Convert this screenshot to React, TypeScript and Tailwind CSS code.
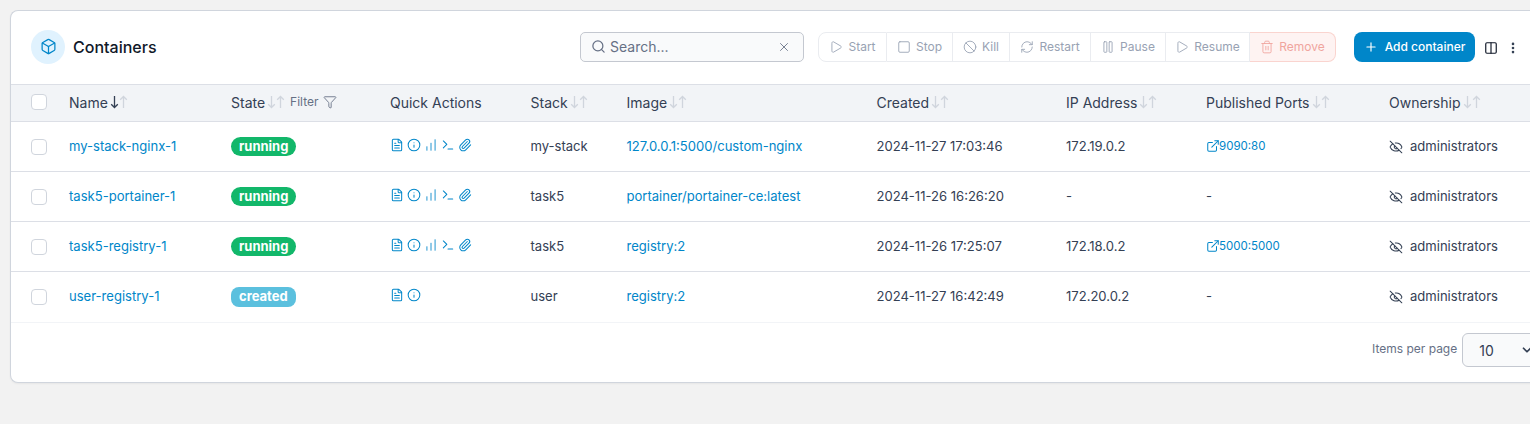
import {
  Ban,
  Box,
  ChartNoAxesColumnIncreasing,
  ChevronDown,
  Columns2,
  ExternalLink,
  EyeOff,
  FileText,
  Filter,
  Info,
  MoreVertical,
  Paperclip,
  Pause,
  Play,
  Plus,
  RefreshCw,
  Search,
  Square,
  Terminal,
  Trash2,
  X,
} from 'lucide-react';

const gridCols = 'grid grid-cols-[58px_162px_159px_140.5px_96px_250px_189.5px_140px_183px_1fr] items-center';

const actions = [
  { label: 'Start', icon: Play, className: 'w-[69px]' },
  { label: 'Stop', icon: Square, className: 'w-[66px]' },
  { label: 'Kill', icon: Ban, className: 'w-[57px]' },
  { label: 'Restart', icon: RefreshCw, className: 'w-[81px]' },
  { label: 'Pause', icon: Pause, className: 'w-[75px]' },
  { label: 'Resume', icon: Play, className: 'w-[84px]' },
];

const containers = [
  {
    name: 'my-stack-nginx-1',
    state: 'running',
    stack: 'my-stack',
    image: '127.0.0.1:5000/custom-nginx',
    created: '2024-11-27 17:03:46',
    ip: '172.19.0.2',
    port: '9090:80',
  },
  {
    name: 'task5-portainer-1',
    state: 'running',
    stack: 'task5',
    image: 'portainer/portainer-ce:latest',
    created: '2024-11-26 16:26:20',
    ip: '-',
    port: '',
  },
  {
    name: 'task5-registry-1',
    state: 'running',
    stack: 'task5',
    image: 'registry:2',
    created: '2024-11-26 17:25:07',
    ip: '172.18.0.2',
    port: '5000:5000',
  },
  {
    name: 'user-registry-1',
    state: 'created',
    stack: 'user',
    image: 'registry:2',
    created: '2024-11-27 16:42:49',
    ip: '172.20.0.2',
    port: '',
  },
];

// table sort arrows are narrower than the lucide ones
const SortArrow = ({ up, className }: { up?: boolean; className: string }) => (
  <svg viewBox="0 0 9 14" fill="none" stroke="currentColor" strokeWidth={1.3} className={`h-3.5 w-[9px] ${className}`}>
    {up ? <path d="M4.5 13V1.5M1.2 4.8l3.3-3.3 3.3 3.3" /> : <path d="M4.5 1v11.5M1.2 9.2l3.3 3.3 3.3-3.3" />}
  </svg>
);

const SortHeader = ({ label, active }: { label: string; active?: boolean }) => (
  <div className="flex items-center">
    <span>{label}</span>
    <SortArrow className={active ? 'ml-0.5 text-[#344054]' : 'ml-0.5 text-[#d0d5dd]'} />
    <SortArrow up className="text-[#d0d5dd]" />
  </div>
);

const Checkbox = () => <div className="ml-5 h-4 w-4 rounded-[4px] border border-[#d0d5dd] bg-white" />;

const App = () => {
  return (
    <div className="h-[424px] w-[1530px] overflow-hidden bg-[#f2f2f2] pl-2.5 pt-2.5 font-['Inter',sans-serif]">
      <div className="h-[373px] w-[1540px] rounded-l-lg border border-r-0 border-[#d0d5dd] bg-white shadow-[0_1px_2px_rgba(0,0,0,0.05)]">
        <div className="flex h-[74px] items-center border-b border-[#dcdfe6] pb-0.5 pl-5">
          <div className="flex h-[34px] w-[34px] shrink-0 items-center justify-center rounded-full bg-[#e0f2fe]">
            <Box className="h-[17px] w-[17px] text-[#0086c9]" strokeWidth={1.75} />
          </div>
          <h1 className="ml-2 w-[84px] shrink-0 whitespace-nowrap text-[16px] font-medium text-[#101828]">Containers</h1>

          <div className="ml-[423px] flex h-[30px] w-[224px] shrink-0 items-center rounded-[5px] border border-[#c4c8d0] bg-[#f9fafb] pl-2.5 pr-3">
            <Search className="h-[15px] w-[15px] text-[#667085]" />
            <span className="ml-1 flex-1 text-[14px] text-[#667085]">Search...</span>
            <X className="h-3.5 w-3.5 text-[#667085]" strokeWidth={1.5} />
          </div>

          <div className="ml-[14px] flex h-[30px] shrink-0 items-stretch text-[12px] text-[#98a2b3]">
            {actions.map((action, i) => {
              const Icon = action.icon;
              return (
                <div
                  key={action.label}
                  className={`flex items-center justify-center gap-[5px] border border-[#eaecf0] bg-white ${action.className} ${
                    i === 0 ? 'rounded-l-lg' : 'border-l-0'
                  }`}
                >
                  <Icon className="h-3.5 w-3.5 text-[#98a2b3]" strokeWidth={1.5} />
                  {action.label}
                </div>
              );
            })}
            <div className="flex w-[86px] items-center justify-center gap-[5px] rounded-r-lg border border-l-0 border-[#fad4cf] bg-[#fef3f2] text-[#f0a59e]">
              <Trash2 className="h-3.5 w-3.5" strokeWidth={1.5} />
              Remove
            </div>
          </div>

          <div className="ml-[18px] flex h-[30px] w-[121px] shrink-0 items-center justify-center gap-[7px] whitespace-nowrap rounded-[8px] bg-[#0086c9] text-[12px] font-medium text-white">
            <Plus className="h-3.5 w-3.5" strokeWidth={2} />
            Add container
          </div>
          <Columns2 className="ml-[9px] mt-0.5 h-[14px] w-[14px] shrink-0 text-[#101828]" strokeWidth={2} />
          <MoreVertical className="ml-[8px] mt-0.5 h-[14px] w-[14px] shrink-0 text-[#344054]" strokeWidth={2.5} />
        </div>

        <div className={`${gridCols} h-[37px] border-b border-[#dcdfe6] bg-[#f2f4f7] pb-0.5 text-[14px] text-[#344054]`}>
          <Checkbox />
          <SortHeader label="Name" active />
          <div className="flex items-center">
            <SortHeader label="State" />
            <span className="ml-[5px] text-[12px] text-[#667085]">Filter</span>
            <Filter className="ml-[4px] h-[14px] w-[14px] text-[#667085]" strokeWidth={1.5} />
          </div>
          <span>Quick Actions</span>
          <SortHeader label="Stack" />
          <SortHeader label="Image" />
          <SortHeader label="Created" />
          <SortHeader label="IP Address" />
          <SortHeader label="Published Ports" />
          <SortHeader label="Ownership" />
        </div>

        {containers.map((c, i) => (
          <div
            key={c.name}
            className={`${gridCols} border-b text-[13.05px] text-[#344054] ${
              i === containers.length - 1 ? 'h-[51px] border-[#f2f4f7]' : 'h-[50px] border-[#dcdfe6]'
            }`}
          >
            <Checkbox />
            <span className="text-[#0086c9]">{c.name}</span>
            <div>
              <span
                className={
                  c.state === 'running'
                    ? 'inline-block rounded-full bg-[#12b76a] px-2 py-px text-[13px] font-bold leading-[17px] text-white'
                    : 'inline-block rounded-[8px] bg-[#5bc0de] px-2 pb-0.5 pt-px text-[13px] font-bold leading-[17px] text-white'
                }
              >
                {c.state}
              </span>
            </div>
            <div className="-mt-1 flex items-center gap-[3px] text-[#0086c9]">
              <FileText className="h-3.5 w-3.5" strokeWidth={1.75} />
              <Info className="h-3.5 w-3.5" strokeWidth={1.75} />
              {c.state === 'running' && (
                <>
                  <ChartNoAxesColumnIncreasing className="h-3.5 w-3.5" strokeWidth={1.5} />
                  <Terminal className="h-3.5 w-3.5" strokeWidth={1.75} />
                  <Paperclip className="h-3.5 w-3.5" strokeWidth={1.75} />
                </>
              )}
            </div>
            <span>{c.stack}</span>
            <span className="text-[#0086c9]">{c.image}</span>
            <span>{c.created}</span>
            <span>{c.ip}</span>
            {c.port ? (
              <div className="flex items-center text-[11.5px] text-[#0086c9]">
                <ExternalLink className="-mt-0.5 h-3.5 w-3.5" strokeWidth={1.75} />
                <span className="-ml-px mt-px">{c.port}</span>
              </div>
            ) : (
              <span>-</span>
            )}
            <div className="flex items-center gap-[7px]">
              <EyeOff className="h-3.5 w-3.5" strokeWidth={1.75} />
              <span>administrators</span>
            </div>
          </div>
        ))}

        <div className="flex items-center pl-[1361px] pt-[10px]">
          <span className="-mt-0.5 whitespace-nowrap text-[12px] text-[#667085]">Items per page</span>
          <div className="ml-[5px] flex h-[34px] w-[80px] shrink-0 items-center rounded-[6px] border border-[#c4c8d0] bg-[#f9fafb] pl-4 text-[14px] text-[#344054]">
            10
            <ChevronDown className="ml-[26px] h-3.5 w-3.5" strokeWidth={3} />
          </div>
        </div>
      </div>
    </div>
  );
};

export default App;
